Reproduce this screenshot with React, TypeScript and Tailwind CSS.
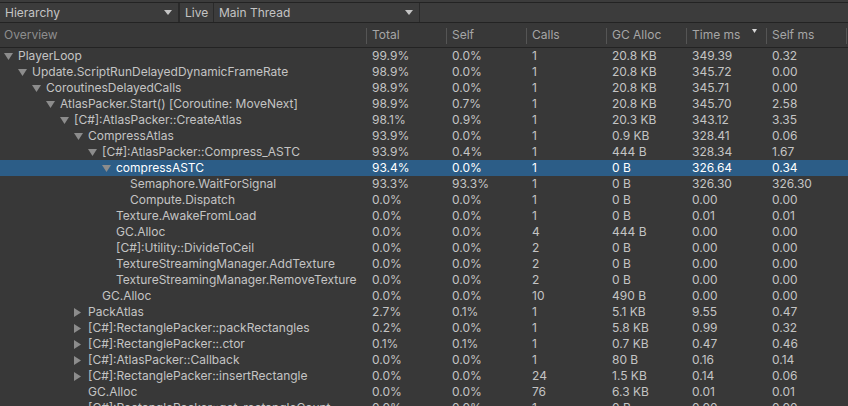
import React from "react";

type Row = {
  name: string;
  level: number;
  arrow: "open" | "closed" | "none";
  total: string;
  self: string;
  calls: string;
  gc: string;
  time: string;
  selfMs: string;
  selected?: boolean;
};

const rows: Row[] = [
  { name: "PlayerLoop", level: 0, arrow: "open", total: "99.9%", self: "0.0%", calls: "1", gc: "20.8 KB", time: "349.39", selfMs: "0.32" },
  { name: "Update.ScriptRunDelayedDynamicFrameRate", level: 1, arrow: "open", total: "98.9%", self: "0.0%", calls: "1", gc: "20.8 KB", time: "345.72", selfMs: "0.00" },
  { name: "CoroutinesDelayedCalls", level: 2, arrow: "open", total: "98.9%", self: "0.0%", calls: "1", gc: "20.8 KB", time: "345.71", selfMs: "0.00" },
  { name: "AtlasPacker.Start() [Coroutine: MoveNext]", level: 3, arrow: "open", total: "98.9%", self: "0.7%", calls: "1", gc: "20.8 KB", time: "345.70", selfMs: "2.58" },
  { name: "[C#]:AtlasPacker::CreateAtlas", level: 4, arrow: "open", total: "98.1%", self: "0.9%", calls: "1", gc: "20.3 KB", time: "343.12", selfMs: "3.35" },
  { name: "CompressAtlas", level: 5, arrow: "open", total: "93.9%", self: "0.0%", calls: "1", gc: "0.9 KB", time: "328.41", selfMs: "0.06" },
  { name: "[C#]:AtlasPacker::Compress_ASTC", level: 6, arrow: "open", total: "93.9%", self: "0.4%", calls: "1", gc: "444 B", time: "328.34", selfMs: "1.67" },
  { name: "compressASTC", level: 7, arrow: "open", total: "93.4%", self: "0.0%", calls: "1", gc: "0 B", time: "326.64", selfMs: "0.34", selected: true },
  { name: "Semaphore.WaitForSignal", level: 8, arrow: "none", total: "93.3%", self: "93.3%", calls: "1", gc: "0 B", time: "326.30", selfMs: "326.30" },
  { name: "Compute.Dispatch", level: 8, arrow: "none", total: "0.0%", self: "0.0%", calls: "1", gc: "0 B", time: "0.00", selfMs: "0.00" },
  { name: "Texture.AwakeFromLoad", level: 7, arrow: "none", total: "0.0%", self: "0.0%", calls: "1", gc: "0 B", time: "0.01", selfMs: "0.01" },
  { name: "GC.Alloc", level: 7, arrow: "none", total: "0.0%", self: "0.0%", calls: "4", gc: "444 B", time: "0.00", selfMs: "0.00" },
  { name: "[C#]:Utility::DivideToCeil", level: 7, arrow: "none", total: "0.0%", self: "0.0%", calls: "2", gc: "0 B", time: "0.00", selfMs: "0.00" },
  { name: "TextureStreamingManager.AddTexture", level: 7, arrow: "none", total: "0.0%", self: "0.0%", calls: "2", gc: "0 B", time: "0.00", selfMs: "0.00" },
  { name: "TextureStreamingManager.RemoveTexture", level: 7, arrow: "none", total: "0.0%", self: "0.0%", calls: "2", gc: "0 B", time: "0.00", selfMs: "0.00" },
  { name: "GC.Alloc", level: 6, arrow: "none", total: "0.0%", self: "0.0%", calls: "10", gc: "490 B", time: "0.00", selfMs: "0.00" },
  { name: "PackAtlas", level: 5, arrow: "closed", total: "2.7%", self: "0.1%", calls: "1", gc: "5.1 KB", time: "9.55", selfMs: "0.47" },
  { name: "[C#]:RectanglePacker::packRectangles", level: 5, arrow: "closed", total: "0.2%", self: "0.0%", calls: "1", gc: "5.8 KB", time: "0.99", selfMs: "0.32" },
  { name: "[C#]:RectanglePacker::.ctor", level: 5, arrow: "closed", total: "0.1%", self: "0.1%", calls: "1", gc: "0.7 KB", time: "0.47", selfMs: "0.46" },
  { name: "[C#]:AtlasPacker::Callback", level: 5, arrow: "closed", total: "0.0%", self: "0.0%", calls: "1", gc: "80 B", time: "0.16", selfMs: "0.14" },
  { name: "[C#]:RectanglePacker::insertRectangle", level: 5, arrow: "closed", total: "0.0%", self: "0.0%", calls: "24", gc: "1.5 KB", time: "0.14", selfMs: "0.06" },
  { name: "GC.Alloc", level: 5, arrow: "none", total: "0.0%", self: "0.0%", calls: "76", gc: "6.3 KB", time: "0.01", selfMs: "0.01" },
  { name: "[C#]:RectanglePacker::get_rectangleCount", level: 5, arrow: "none", total: "0.0%", self: "0.0%", calls: "1", gc: "0 B", time: "0.00", selfMs: "0.00" },
];

const cols = ["Total", "Self", "Calls", "GC Alloc", "Time ms", "Self ms"];

const DropArrow = () => (
  <svg width="8" height="5" viewBox="0 0 8 5" className="shrink-0">
    <path d="M0 0h8L4 5z" fill="#c4c4c4" />
  </svg>
);

const TreeArrow = ({ kind }: { kind: Row["arrow"] }) => {
  if (kind === "open")
    return (
      <svg width="9" height="7" viewBox="0 0 9 7">
        <path d="M0 0h9L4.5 7z" fill="#8c8c8c" />
      </svg>
    );
  if (kind === "closed")
    return (
      <svg width="7" height="9" viewBox="0 0 7 9">
        <path d="M0 0l7 4.5L0 9z" fill="#8c8c8c" />
      </svg>
    );
  return null;
};

export default function App() {
  return (
    <div
      className="w-[848px] h-[406px] overflow-hidden bg-[#383838] text-[12px] text-[#c4c4c4] flex flex-col"
      style={{ fontFamily: "Inter, 'Noto Sans', sans-serif" }}
    >
      <div className="h-[2px] bg-[#3c3c3c] shrink-0" />
      <div className="h-[21px] shrink-0 flex bg-[#3c3c3c] border-y border-[#232323]">
        <div className="w-[180px] flex items-center justify-between pl-[5px] pr-[6px] border-r-2 border-[#2a2a2a]">
          <span>Hierarchy</span>
          <DropArrow />
        </div>
        <div className="w-[34px] flex items-center pl-[5px] border-r border-[#2a2a2a]">Live</div>
        <div className="w-[206px] flex items-center justify-between pl-[5px] pr-[6px] border-r border-[#2a2a2a]">
          <span>Main Thread</span>
          <DropArrow />
        </div>
        <div className="flex-1" />
      </div>

      <div className="h-[25px] shrink-0 grid grid-cols-[366px_80px_80px_80px_80px_80px_80px_2px] items-center border-b border-[#232323] bg-[#383838]">
        <div className="pl-[4px] text-[#8e8e8e]">Overview</div>
        {cols.map((c) => (
          <div key={c} className="relative h-full flex items-center pl-[6px] text-[#a6a6a6]">
            <div className="absolute left-0 top-[5px] bottom-[3px] w-px bg-[#555555]" />
            {c}
            {c === "Time ms" && (
              <svg width="5" height="4" viewBox="0 0 5 4" className="absolute right-[9px] top-[6px]">
                <path d="M0 0h5L2.5 4z" fill="#d8d8d8" />
              </svg>
            )}
          </div>
        ))}
        <div className="relative h-full">
          <div className="absolute left-0 top-[5px] bottom-[3px] w-px bg-[#555555]" />
        </div>
      </div>

      <div className="flex flex-col">
        {rows.map((r, i) => (
          <div
            key={i}
            className={
              "h-4 shrink-0 grid grid-cols-[366px_80px_80px_80px_80px_80px_80px] items-center leading-4 whitespace-nowrap " +
              (r.selected ? "bg-[#2c5d87] text-white" : "")
            }
          >
            <div className="flex items-center" style={{ paddingLeft: 4 + r.level * 14 }}>
              <span className="w-[14px] shrink-0 flex items-center">
                <TreeArrow kind={r.arrow} />
              </span>
              <span>{r.name}</span>
            </div>
            <div className="pl-[6px]">{r.total}</div>
            <div className="pl-[6px]">{r.self}</div>
            <div className="pl-[6px]">{r.calls}</div>
            <div className="pl-[6px]">{r.gc}</div>
            <div className="pl-[6px]">{r.time}</div>
            <div className="pl-[6px]">{r.selfMs}</div>
          </div>
        ))}
      </div>
    </div>
  );
}
